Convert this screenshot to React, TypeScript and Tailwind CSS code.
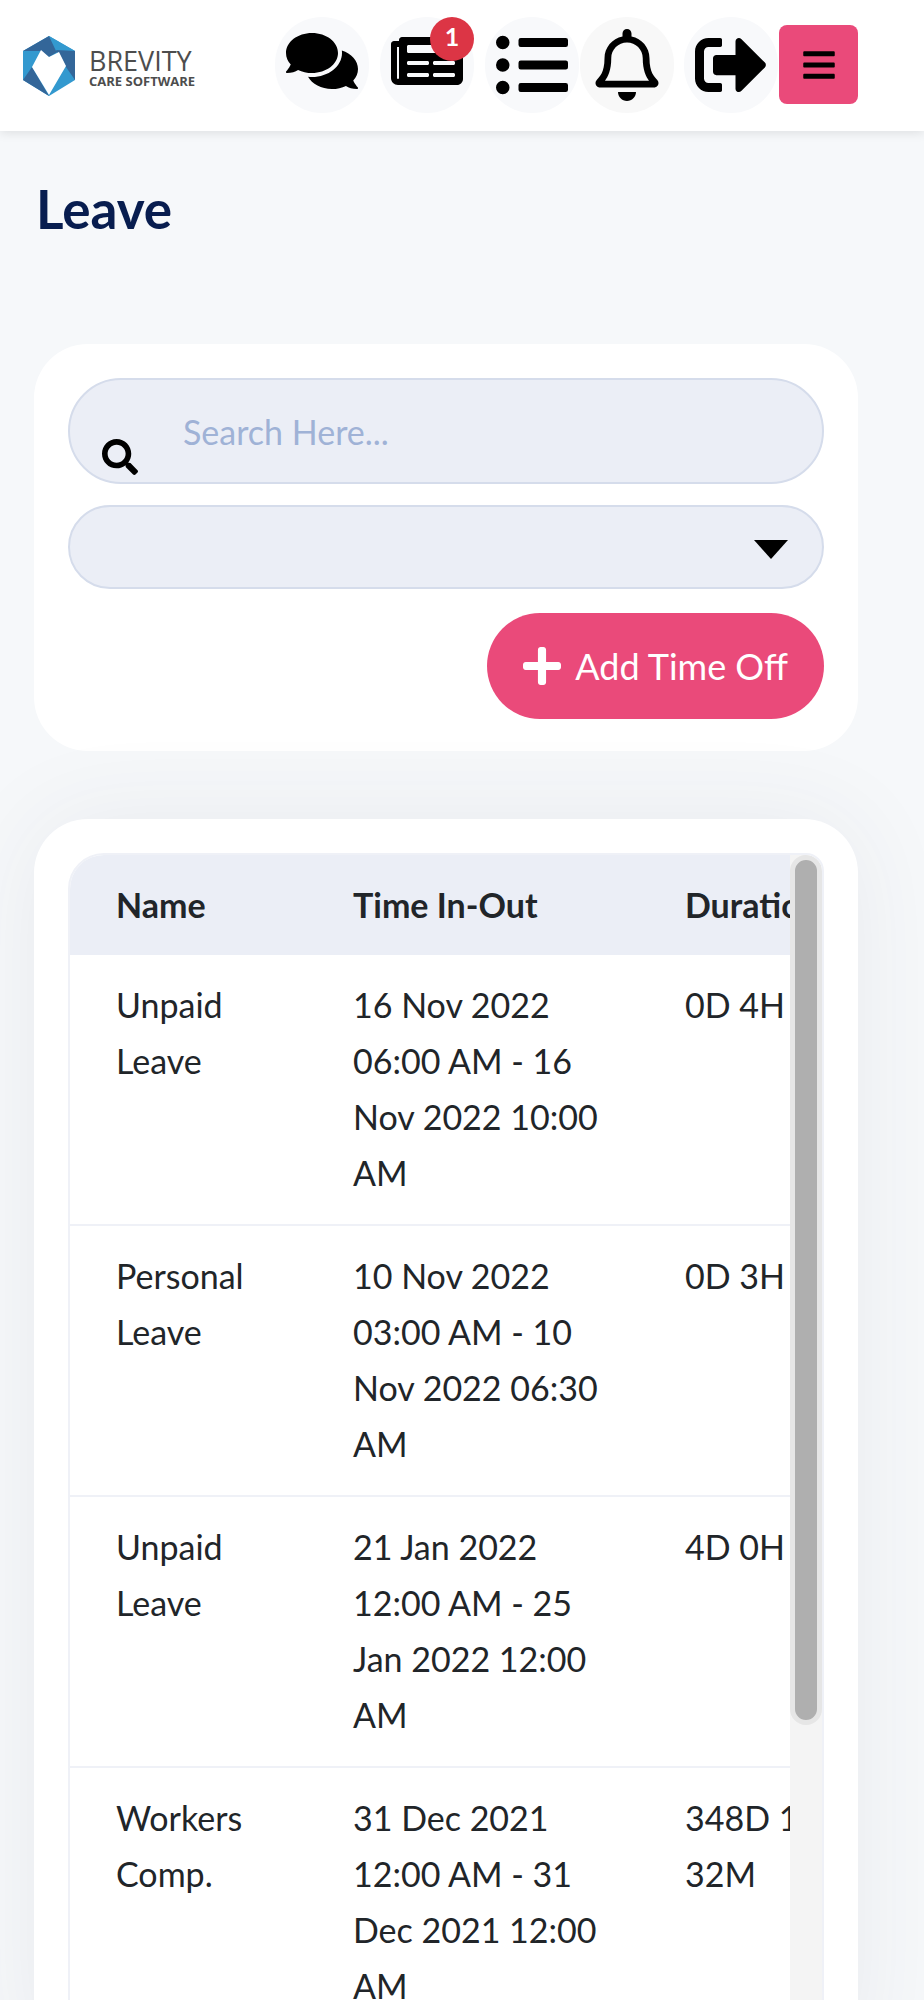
import React from "react";
import {
  FaBars,
  FaComments,
  FaListUl,
  FaNewspaper,
  FaPlus,
  FaRegBell,
  FaSearch,
  FaSignOutAlt,
} from "react-icons/fa";

const leaves = [
  { name: "Unpaid Leave", time: "16 Nov 2022 06:00 AM - 16 Nov 2022 10:00 AM", duration: "0D 4H" },
  { name: "Personal Leave", time: "10 Nov 2022 03:00 AM - 10 Nov 2022 06:30 AM", duration: "0D 3H" },
  { name: "Unpaid Leave", time: "21 Jan 2022 12:00 AM - 25 Jan 2022 12:00 AM", duration: "4D 0H" },
  { name: "Workers Comp.", time: "31 Dec 2021 12:00 AM - 31 Dec 2021 12:00 AM", duration: "348D 1H 32M" },
];

const round = "flex h-24 w-[94px] shrink-0 items-center justify-center rounded-full bg-[#f8f9fb]";

function Logo() {
  return (
    <a href="#" aria-label="Brevity Care Software" className="flex items-center gap-3.5">
      <svg viewBox="0 0 52 60" className="h-15 w-13 shrink-0" aria-hidden="true">
        <path d="M26 0 52 15V44L26 60 0 44V15Z" fill="#3399cf" />
        <path d="M26 0 0 15H17L26 21 36 15Z" fill="#336699" />
        <path d="M26 0 52 15H33Z" fill="#3399cf" />
        <path d="M33 14 52 15V44L43 31Z" fill="#336699" />
        <path d="M9 31 0 44 26 60Z" fill="#336699" />
        <path d="M18 14 26 21 36 16 43 30 26 59 9 31Z" fill="#fff" />
      </svg>
      <span className="flex flex-col pt-0.5 font-['Open_Sans'] text-[#4d4d4d]">
        <span className="text-[27px] leading-7">BREVITY</span>
        <span className="text-[13px] leading-3 font-bold">CARE SOFTWARE</span>
      </span>
    </a>
  );
}

function Header() {
  return (
    <header className="relative flex h-[131px] shrink-0 items-center justify-between bg-white pr-[66px] pl-[23px] shadow-[0_2px_10px_rgba(0,0,0,0.1)]">
      <Logo />
      <nav className="flex items-center pb-0.5">
        <button aria-label="Messages" className={`${round} mr-[11px] pb-2`}>
          <FaComments className="h-16 w-18" />
        </button>
        <button aria-label="News, 1 unread" className={`${round} relative mr-[11px] pb-2`}>
          <FaNewspaper className="h-16 w-18" />
          <span className="absolute top-0 right-0 flex h-11 w-11 items-center justify-center rounded-full bg-[#dc3545] pb-1 text-[25px] font-bold text-white">
            1
          </span>
        </button>
        <button aria-label="Tasks" className={`${round} mr-px`}>
          <FaListUl className="h-18 w-18" />
        </button>
        <button
          aria-label="Notifications"
          className="mr-2.5 flex h-24 w-[94px] shrink-0 items-center justify-center rounded-full bg-[#f8f8f8]"
        >
          <FaRegBell className="h-18 w-16" />
        </button>
        <button aria-label="Sign out" className={`${round} mr-px`}>
          <FaSignOutAlt className="h-18 w-18" />
        </button>
        <button
          aria-label="Menu"
          className="flex h-[79px] w-[79px] shrink-0 items-center justify-center rounded-lg bg-[#ea4a7a]"
        >
          <FaBars className="h-9 w-8" />
        </button>
      </nav>
    </header>
  );
}

function Filters() {
  return (
    <section className="flex flex-col rounded-[54px] bg-white px-[34px] pt-[34px] pb-8">
      <div className="relative">
        <input
          type="search"
          aria-label="Search leave"
          placeholder="Search Here..."
          className="block h-[106px] w-full rounded-full border-2 border-[#d5dceb] bg-[#ebeef6] pr-8 pl-[113px] text-[34px] placeholder:text-[#9fb2d6] placeholder:opacity-100"
        />
        <FaSearch className="absolute top-[61px] left-[34px] h-9 w-9" />
      </div>
      <div className="relative mt-[21px]">
        <select
          aria-label="Leave type"
          className="block h-[84px] w-full appearance-none rounded-full border-2 border-[#d5dceb] bg-[#ebeef6] px-8 text-[34px]"
        >
          <option value=""></option>
        </select>
        <svg
          viewBox="0 0 34 19"
          className="pointer-events-none absolute top-[35px] right-9 h-[19px] w-[34px]"
          aria-hidden="true"
        >
          <path d="M0 0H34L17 19Z" />
        </svg>
      </div>
      <button className="mt-6 flex h-[106px] items-center gap-3.5 self-end rounded-full bg-[#ea4a7a] px-9 text-[36px] text-white">
        <FaPlus className="h-11 w-[38px]" />
        Add Time Off
      </button>
    </section>
  );
}

function LeaveTable() {
  return (
    <section className="relative mt-[68px] rounded-[54px] bg-white p-[34px] shadow-[0_0_100px_rgba(60,55,90,0.07)]">
      <div className="flex overflow-hidden rounded-[36px] rounded-tr-[18px] border-2 border-[#eff1f7]">
        <div className="min-w-0 flex-1 overflow-hidden">
          <table className="w-[1160px] table-fixed text-left text-[34px] leading-[56px] text-[#212529]">
            <colgroup>
              <col className="w-[237px]" />
              <col className="w-[332px]" />
              <col className="w-[250px]" />
              <col />
            </colgroup>
            <thead className="bg-[#ebeef6]">
              <tr className="h-[100px]">
                <th className="px-[46px] font-bold">Name</th>
                <th className="px-[46px] font-bold">Time In-Out</th>
                <th className="px-[46px] font-bold">Duration</th>
                <th></th>
              </tr>
            </thead>
            <tbody>
              {leaves.map((leave) => (
                <tr key={leave.time} className="border-b-2 border-[#eff1f7] align-top">
                  <td className="pt-[22px] pr-8 pb-[23px] pl-[46px]">{leave.name}</td>
                  <td className="pt-[22px] pr-8 pb-[23px] pl-[46px]">{leave.time}</td>
                  <td className="pt-[22px] pr-8 pb-[23px] pl-[46px]">{leave.duration}</td>
                  <td></td>
                </tr>
              ))}
            </tbody>
          </table>
        </div>
        <div className="w-8 shrink-0 bg-[#f4f4f4]">
          <div className="h-[870px] rounded-full border-[5px] border-[#e6e6e6] bg-[#afafaf]" />
        </div>
      </div>
    </section>
  );
}

export default function App() {
  return (
    <div className="flex h-screen flex-col overflow-hidden bg-[#f6f8fa] font-['Lato',sans-serif] text-black">
      <Header />
      <main className="flex flex-col pr-[66px] pl-[34px]">
        <h1 className="mt-[46px] mb-[103px] pl-0.5 text-[53px] leading-16 font-bold text-[#081d4f]">Leave</h1>
        <Filters />
        <LeaveTable />
      </main>
    </div>
  );
}
